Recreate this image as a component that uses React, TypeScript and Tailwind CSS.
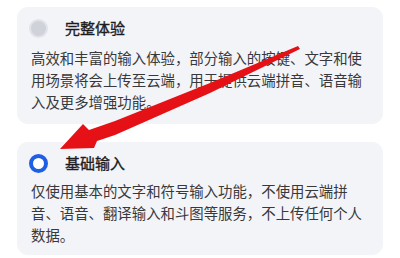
import React from "react";

function Card({
  title,
  body,
  selected,
  className,
  bodyGap,
}: {
  title: string;
  body: string;
  selected: boolean;
  className?: string;
  bodyGap: string;
}) {
  return (
    <div className={`w-[366px] rounded-[11px] bg-[#f3f4f8] pl-[14px] pr-[12px] ${className ?? ""}`}>
      <div className="flex h-[24px] items-center">
        {selected ? (
          <div className="ml-[-2px] h-[19px] w-[19px] rounded-full border-[4px] border-[#1f5fe3] bg-white" />
        ) : (
          <div className="ml-[-2px] h-[19px] w-[19px] rounded-full border-[2px] border-[#e2e3e9] bg-[#d0d2d9]" />
        )}
        <span className="ml-[17px] text-[15px] font-normal leading-[24px] text-[#1c1c1e] [-webkit-text-stroke:0.35px_#1c1c1e]">
          {title}
        </span>
      </div>
      <p className={`${bodyGap} text-[14.4px] leading-[22px] text-[#38393b]`}>{body}</p>
    </div>
  );
}

export default function App() {
  return (
    <div
      className="relative h-[258px] w-[400px] overflow-hidden bg-white pl-[17px] pt-[7px]"
      style={{ fontFamily: '"Noto Sans CJK SC", "Noto Sans", sans-serif' }}
    >
      <Card
        title="完整体验"
        body="高效和丰富的输入体验，部分输入的按键、文字和使用场景将会上传至云端，用于提供云端拼音、语音输入及更多增强功能。"
        selected={false}
        className="pt-[9px] pb-[11px]"
        bodyGap="mt-[7px]"
      />
      <Card
        title="基础输入"
        body="仅使用基本的文字和符号输入功能，不使用云端拼音、语音、翻译输入和斗图等服务，不上传任何个人数据。"
        selected={true}
        className="mt-[18px] pt-[9px] pb-[9px]"
        bodyGap="mt-[5px]"
      />
      <svg className="pointer-events-none absolute left-0 top-0" width="400" height="258" viewBox="0 0 400 258">
        <defs>
          <linearGradient id="ar" x1="0" y1="0" x2="1" y2="1">
            <stop offset="0" stopColor="#ea1b1f" />
            <stop offset="1" stopColor="#e0070d" />
          </linearGradient>
        </defs>
        <polygon
          points="60,149 83,124 89,130 115,121 210,83 298,46 300,49 210,93 115,135 97,141 94,148"
          fill="url(#ar)"
        />
      </svg>
    </div>
  );
}
